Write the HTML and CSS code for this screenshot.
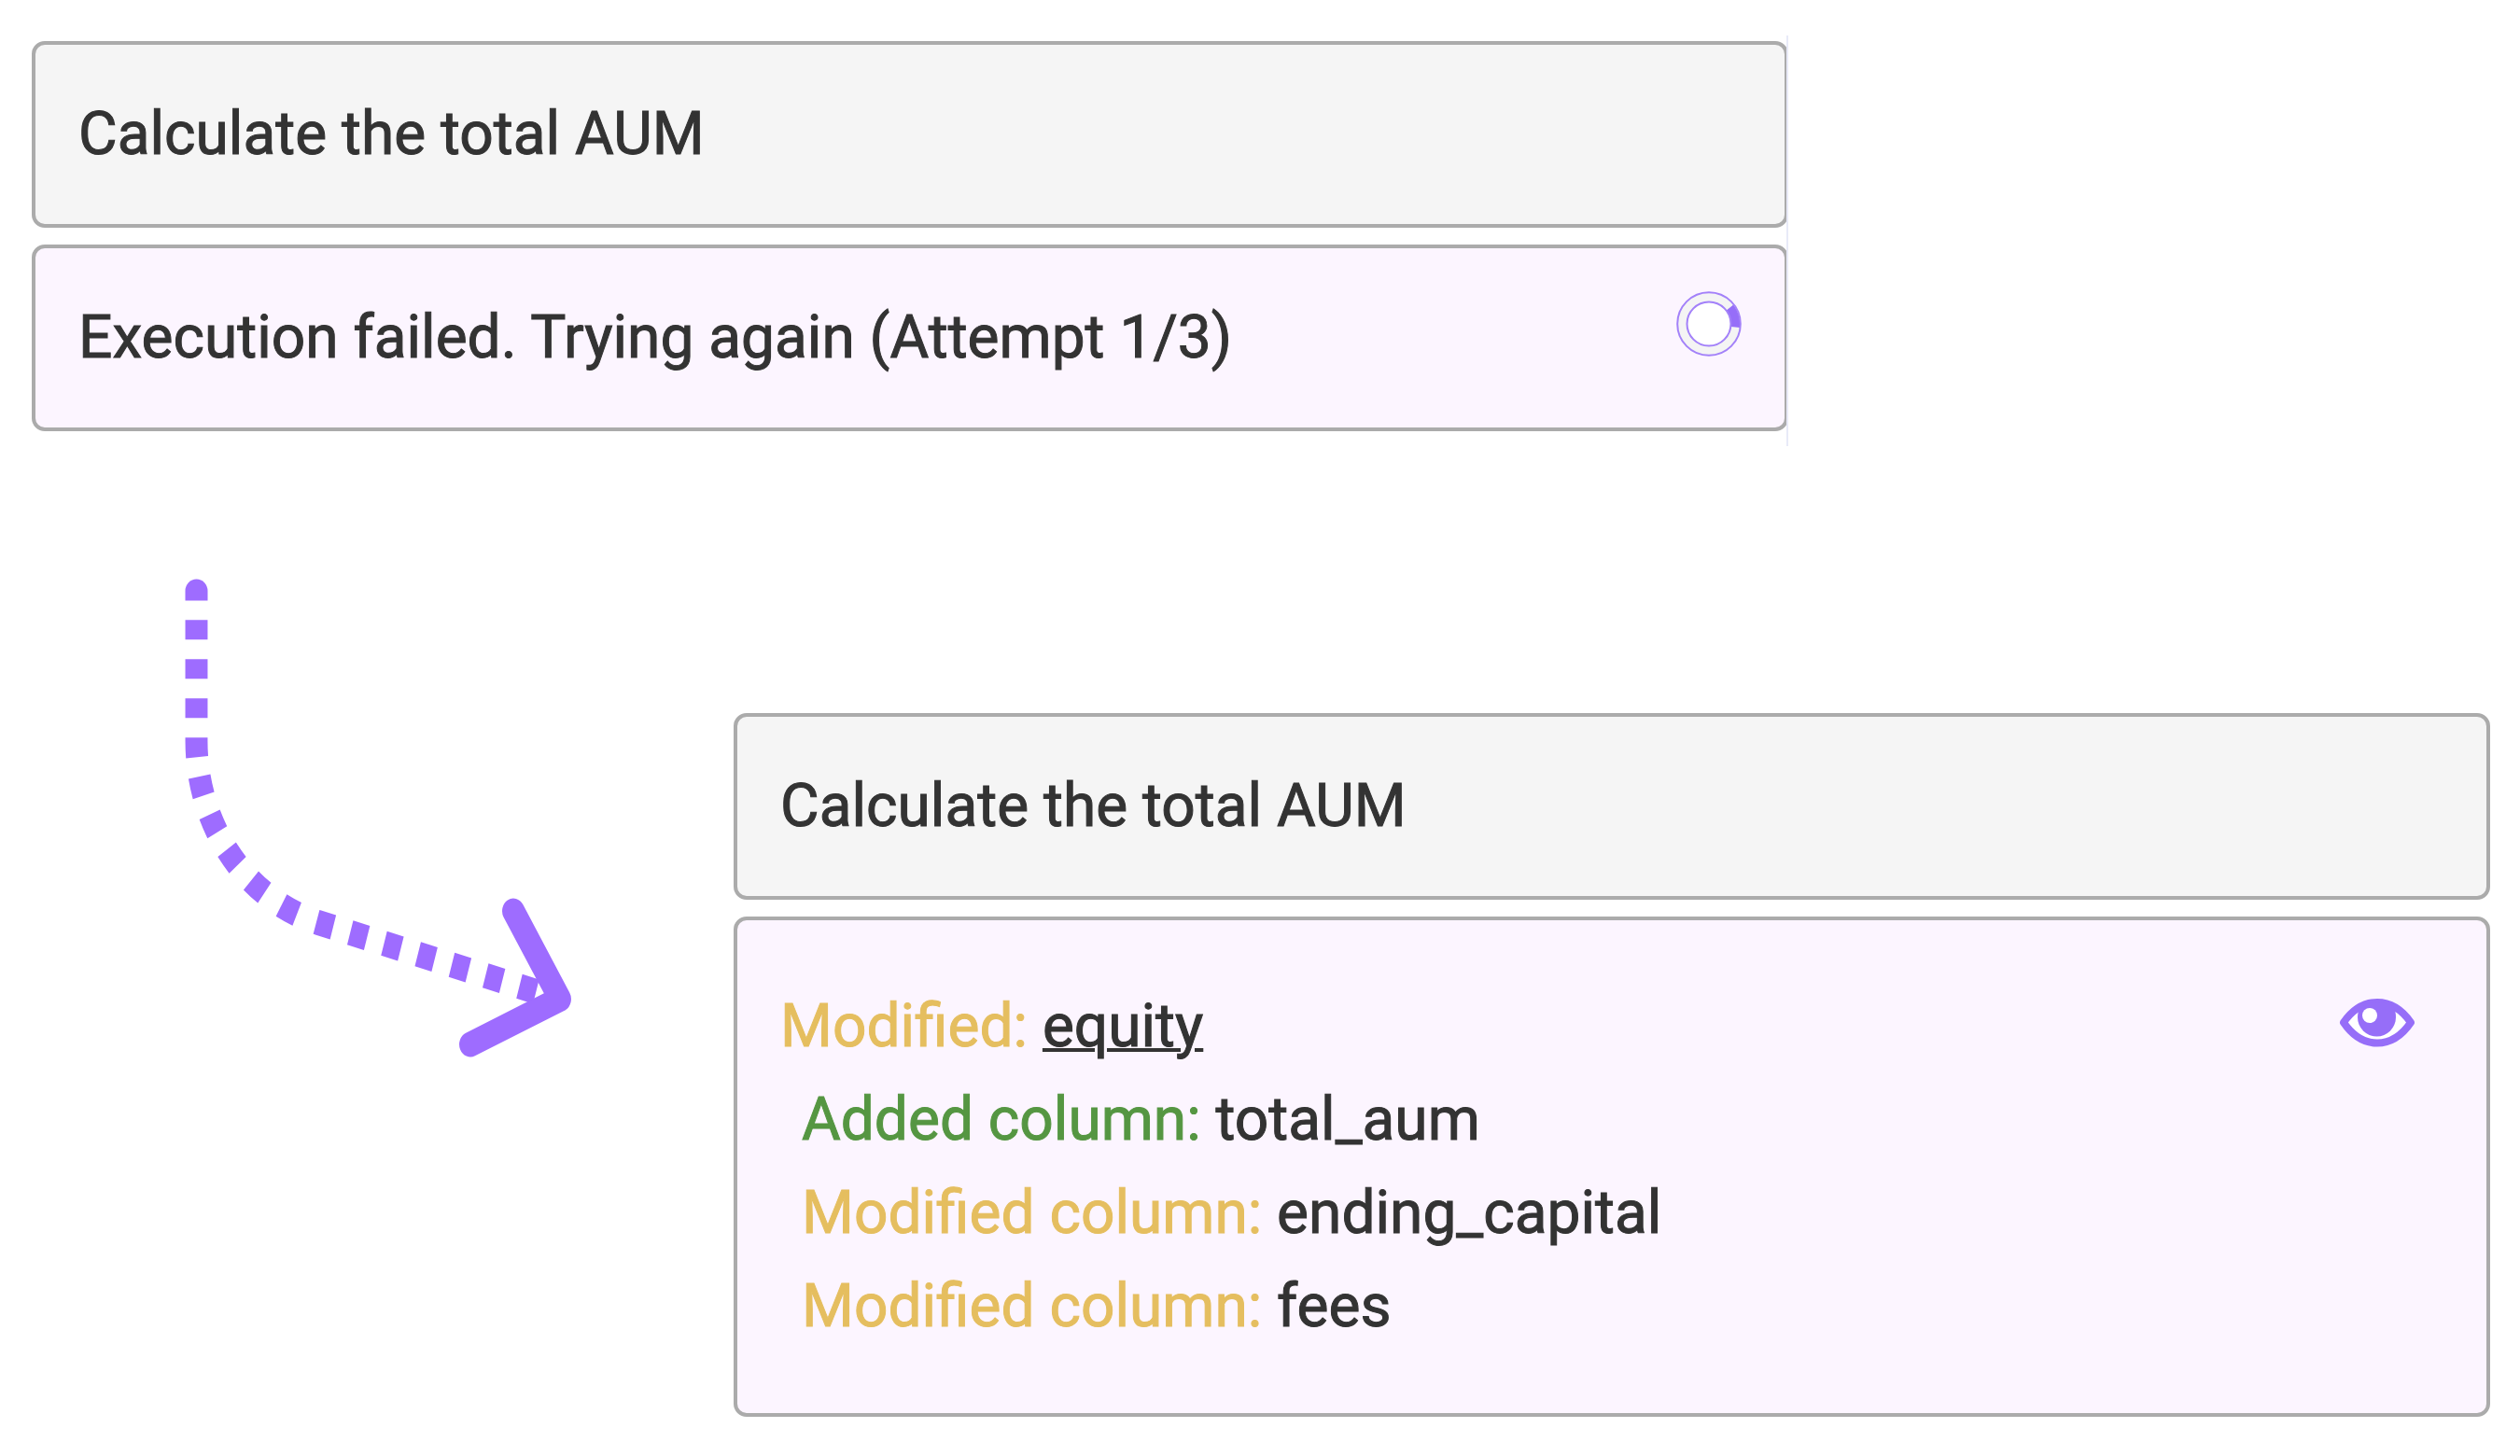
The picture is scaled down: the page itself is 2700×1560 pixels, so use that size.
FILE: index.html
```html
<!DOCTYPE html>
<html lang="en">
<head>
<meta charset="utf-8">
<title>Calculate the total AUM</title>
<link rel="stylesheet" href="styles.css">
</head>
<body>
<main class="flow">
  <section class="stack stack-before">
    <article class="card card-prompt"><p class="line">Calculate the total AUM</p></article>
    <article class="card card-reply">
      <p class="line">Execution failed. Trying again (Attempt 1/3)</p>
      <svg class="spinner" viewBox="1 1 70 70" role="img" aria-label="Loading">
        <circle cx="36" cy="36" r="29" fill="#fff" stroke="#f4f4f4" stroke-width="10"/>
        <path d="M58.500 18.500A28.500 28.500 0 0 1 64.300 39.500" fill="none" stroke="#966ef8" stroke-width="9.500"/>
        <circle cx="36" cy="36" r="33.800" fill="none" stroke="#a381f9" stroke-width="2"/>
        <circle cx="36" cy="36" r="23.500" fill="#fff" stroke="#a381f9" stroke-width="2"/>
      </svg>
    </article>
  </section>
  <div class="outcome">
    <svg class="arrow" viewBox="0 0 416 516" aria-hidden="true">
      <path d="M0.500 25.500V15A12 12.500 0 0 1 24.500 15V25.500Z" fill="#9e6cff"/>
      <g transform="scale(.886 1)" fill="none" stroke="#9e6cff" stroke-width="27">
        <path d="M14.100 46.300V176A202 202 0 0 0 161.400 370.500L430 446" stroke-dasharray="21 21 21 21 21 21 21 21 21 21.600 21 22 21 23.200 21 24.400 21 25 21 21.500 21 21.500 21 21.500 21 21.500 21 21.500 21 21.500 21 60"/>
        <path d="M397.300 358L453.700 452.400L345.400 501" stroke-linecap="round" stroke-linejoin="round"/>
      </g>
    </svg>
    <section class="stack">
      <article class="card card-prompt"><p class="line">Calculate the total AUM</p></article>
      <article class="card card-reply card-result">
        <div class="changes">
          <p class="line"><span class="modified">Modified:</span> <a class="table-link" href="#equity">equity</a></p>
          <ul class="columns">
            <li class="line"><span class="added">Added column:</span> total_aum</li>
            <li class="line"><span class="modified">Modified column:</span> ending_capital</li>
            <li class="line"><span class="modified">Modified column:</span> fees</li>
          </ul>
        </div>
        <button class="preview" type="button" aria-label="Preview changes">
          <svg class="eye" viewBox="0 0 82 52" aria-hidden="true">
            <path d="M5 25.500Q20 4 41 4T77 25.500Q62 47.500 41 47.500T5 25.500Z" fill="#fff" stroke="#966ef8" stroke-width="8" stroke-linejoin="round"/>
            <path d="M24 8Q41 0 58 8Q61 13 61 20A20.500 20.500 0 0 1 20 20Q20 13 24 8Z" fill="#966ef8"/>
            <circle cx="33" cy="18" r="8" fill="#fff"/>
          </svg>
        </button>
      </article>
    </section>
  </div>
</main>
</body>
</html>
```
FILE: styles.css
```css
* { box-sizing: border-box; }
body {
  margin: 0;
  background: #fff;
  color: #333;
  font-family: Roboto, "Liberation Sans", sans-serif;
  font-size: 64px;
  line-height: 100px;
  -webkit-text-stroke: 1px;
}
.flow {
  display: flex;
  flex-direction: column;
  gap: 156px;
  padding: 44px 32px 42px 34px;
}
.stack {
  display: flex;
  flex-direction: column;
  gap: 18px;
}
.stack-before {
  position: relative;
  width: calc(100% - 752px);
}
/* Edge of the panel, drawn over the cards' right border */
.stack-before::after {
  content: "";
  position: absolute;
  top: -6px;
  right: 0;
  bottom: -16px;
  width: 2px;
  background: #e8eaf8;
}
.card {
  display: flex;
  justify-content: space-between;
  align-items: flex-start;
  padding: 46px;
  border: 4px solid #ababab;
  border-radius: 14px;
}
.card-prompt { background: #f5f5f5; }
.card-reply { background: #fcf5ff; }
.card-result { padding: 64px 76px 64px 46px; }
.line { margin: 0; }
.spinner {
  flex: none;
  width: 70px;
  height: 70px;
}
.outcome {
  display: grid;
  grid-template-columns: 752px 1fr;
}
.outcome .stack { padding-top: 146px; }
.arrow {
  width: 416px;
  height: 516px;
  margin-left: 164px;
}
.columns {
  margin: 0;
  padding: 0 0 0 23px;
  list-style: none;
}
.modified { color: #e5be5f; }
.added { color: #559642; }
.table-link {
  color: inherit;
  text-decoration-thickness: 4px;
}
.preview {
  display: flex;
  margin: 20px 0 0;
  padding: 0;
  border: 0;
  background: none;
  cursor: pointer;
}
.eye {
  width: 82px;
  height: 52px;
}
```
